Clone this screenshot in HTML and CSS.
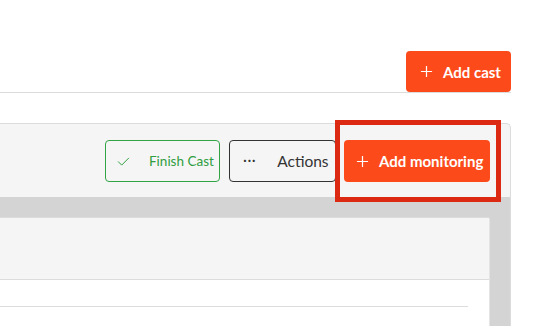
FILE: index.html
```html
<!DOCTYPE html>
<html>
<head>
<meta charset="utf-8">
<link rel="stylesheet" href="styles.css">
</head>
<body>
<div class="page">
  <header class="page-header">
    <button class="btn btn-primary btn-cast">
      <svg class="ico" viewBox="0 0 14 14" width="13" height="13"><path d="M7 1v12M1 7h12" stroke="currentColor" stroke-width="1.3" fill="none"/></svg>
      <span>Add cast</span>
    </button>
  </header>
  <section class="panel">
    <div class="toolbar">
      <button class="btn btn-success">
        <svg class="ico" viewBox="0 0 14 10" width="13" height="9"><path d="M1 5l4 4 8-8" stroke="currentColor" stroke-width="1.1" fill="none"/></svg>
        <span>Finish Cast</span>
      </button>
      <button class="btn btn-outline">
        <span class="dots">···</span>
        <span>Actions</span>
      </button>
      <div class="highlight">
        <button class="btn btn-primary btn-monitor">
          <svg class="ico" viewBox="0 0 14 14" width="13" height="13"><path d="M7 1v12M1 7h12" stroke="currentColor" stroke-width="1.3" fill="none"/></svg>
          <span>Add monitoring</span>
        </button>
      </div>
    </div>
    <div class="panel-body">
      <div class="card">
        <div class="card-head"></div>
        <div class="card-body">
          <div class="divider"></div>
        </div>
      </div>
    </div>
  </section>
</div>
</body>
</html>
```
FILE: styles.css
```css
* { box-sizing: border-box; }
html, body { margin: 0; padding: 0; background: #fff; }
body {
  font-family: "Lato", "Liberation Sans", sans-serif;
  width: 536px;
  height: 326px;
  overflow: hidden;
}
.page {
  margin-left: -20px;
  width: 531px;
}
.page-header {
  height: 93px;
  border-bottom: 1px solid #dcdcdc;
  display: flex;
  justify-content: flex-end;
  align-items: flex-end;
}
.btn {
  display: inline-flex;
  align-items: center;
  height: 42px;
  border-radius: 4px;
  font-family: inherit;
  cursor: pointer;
  padding: 0;
}
.btn-primary {
  background: #fc4a1a;
  border: none;
  color: #fff;
  font-weight: 700;
  font-size: 15px;
}
.btn-cast {
  width: 105px;
  height: 41px;
  padding-left: 14px;
  gap: 10px;
  position: relative;
}
.toolbar {
  display: flex;
  justify-content: flex-end;
  align-items: center;
  gap: 8px;
  padding: 16px 20px 15px 0;
}
.panel {
  margin-top: 30px;
  background: #f5f5f5;
  border-top: 1px solid #dcdcdc;
  border-right: 1px solid #dcdcdc;
  border-top-right-radius: 5px;
}
.btn-success {
  width: 115px;
  background: #f5f5f5;
  border: 1px solid #33a444;
  color: #2f9e40;
  font-size: 13.5px;
  font-weight: 400;
  padding-left: 11px;
  gap: 19px;
  margin-right: 1px;
}
.btn-outline {
  width: 107px;
  background: #f5f5f5;
  border: 1px solid #333;
  color: #333;
  font-size: 15.5px;
  font-weight: 400;
  padding-left: 13px;
  gap: 21px;
}
.dots {
  font-size: 15px;
  letter-spacing: 0.5px;
  line-height: 1;
  position: relative;
  top: -2px;
}
.highlight {
  position: relative;
}
.highlight::after {
  content: "";
  position: absolute;
  top: -20px;
  bottom: -20px;
  left: -9px;
  right: -11px;
  border: 5px solid #dc2a12;
  pointer-events: none;
}
.btn-monitor {
  width: 146px;
  padding-left: 12px;
  gap: 10px;
}
.ico { display: block; flex: none; }
.panel-body {
  background: #d4d4d4;
  padding: 20px 20px 0 0;
  height: 140px;
}
.card {
  background: #fff;
  border-top: 1px solid #dcdcdc;
  border-right: 1px solid #e4e4e4;
  border-top-right-radius: 3px;
  height: 120px;
}
.card-head {
  height: 62px;
  background: #f5f5f5;
  border-bottom: 1px solid #dcdcdc;
}
.card-body {
  padding: 26px 21px 0 0;
}
.divider {
  height: 1px;
  background: #dcdcdc;
}
```
